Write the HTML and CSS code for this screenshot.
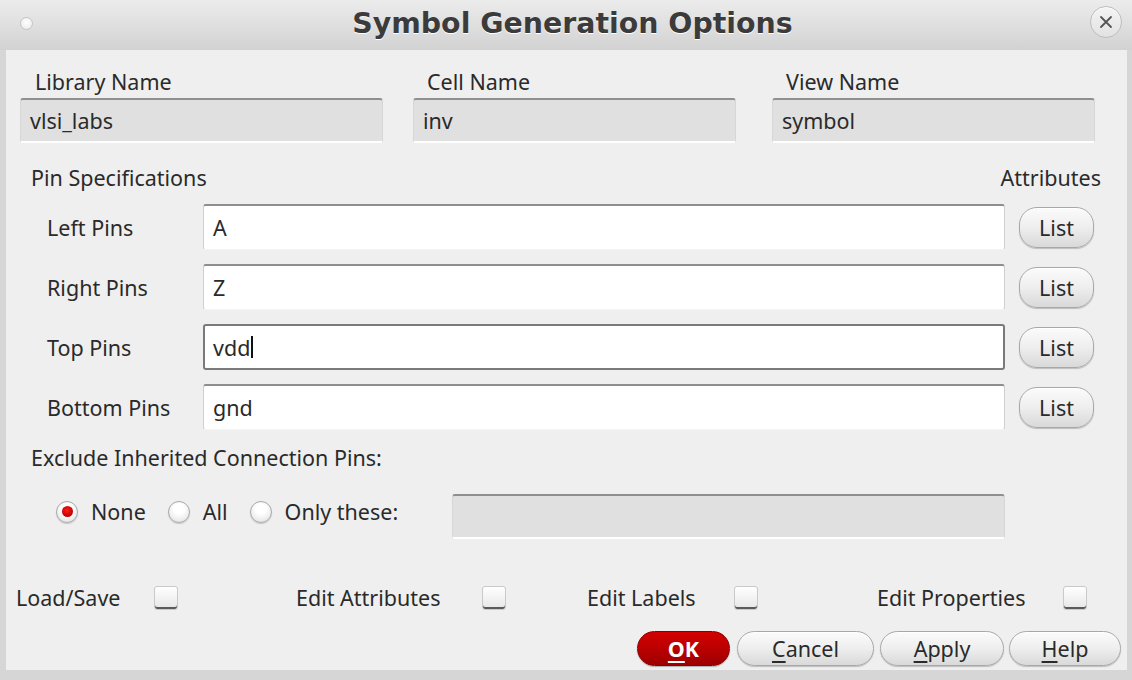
FILE: index.html
```html
<!DOCTYPE html>
<html>
<head>
<meta charset="utf-8">
<link rel="stylesheet" href="styles.css">
</head>
<body>
<div class="win">
  <div class="titlebar">
    <span class="dot"></span>
    <h1 class="title">Symbol Generation Options</h1>
    <span class="close"><svg width="16" height="16" viewBox="0 0 16 16"><path d="M3 3 L13 13 M13 3 L3 13" stroke="#555" stroke-width="1.8" stroke-linecap="round"/></svg></span>
  </div>
  <div class="content">
    <div class="names">
      <div class="nf lib"><div class="nlabel">Library Name</div><div class="ro">vlsi_labs</div></div>
      <div class="nf cell"><div class="nlabel">Cell Name</div><div class="ro">inv</div></div>
      <div class="nf view"><div class="nlabel">View Name</div><div class="ro">symbol</div></div>
    </div>
    <div class="pinhead"><span>Pin Specifications</span><span>Attributes</span></div>
    <div class="pins">
      <div class="pinrow"><span class="plabel">Left Pins</span><div class="in">A</div><span class="btn list">List</span></div>
      <div class="pinrow"><span class="plabel">Right Pins</span><div class="in">Z</div><span class="btn list">List</span></div>
      <div class="pinrow"><span class="plabel">Top Pins</span><div class="in focus">vdd<span class="caret"></span></div><span class="btn list">List</span></div>
      <div class="pinrow"><span class="plabel">Bottom Pins</span><div class="in">gnd</div><span class="btn list">List</span></div>
    </div>
    <div class="excl">Exclude Inherited Connection Pins:</div>
    <div class="radios">
      <span class="opt"><span class="radio on"></span>None</span>
      <span class="opt"><span class="radio"></span>All</span>
      <span class="opt"><span class="radio"></span>Only these:</span>
      <div class="ro only"></div>
    </div>
    <div class="checks">
      <span class="chk c1"><span class="ctext">Load/Save</span><span class="box"></span></span>
      <span class="chk c2"><span class="ctext">Edit Attributes</span><span class="box"></span></span>
      <span class="chk c3"><span class="ctext">Edit Labels</span><span class="box"></span></span>
      <span class="chk c4"><span class="ctext">Edit Properties</span><span class="box"></span></span>
    </div>
    <div class="btns">
      <span class="btn ok"><u>O</u>K</span>
      <span class="btn cancel"><u>C</u>ancel</span>
      <span class="btn apply"><u>A</u>pply</span>
      <span class="btn help"><u>H</u>elp</span>
    </div>
  </div>
</div>
</body>
</html>
```
FILE: styles.css
```css
html, body {
  margin: 0;
  padding: 0;
  background: #d6d6d6;
}
.win {
  width: 1132px;
  height: 680px;
  display: flex;
  flex-direction: column;
  font-family: "Noto Sans", "Open Sans", sans-serif;
  font-size: 21.5px;
  color: #2a2a2a;
}
.titlebar {
  height: 50px;
  flex: none;
  display: flex;
  align-items: center;
  background: linear-gradient(#ececec, #d2d2d2);
}
.dot {
  width: 11px;
  height: 11px;
  border-radius: 50%;
  background: radial-gradient(circle at 50% 40%, #ffffff, #e8e8e8);
  border: 1px solid #c4c4c4;
  margin-left: 20px;
  margin-top: -4px;
}
.title {
  flex: 1;
  margin: 0;
  text-align: center;
  font-family: "DejaVu Sans", sans-serif;
  font-weight: bold;
  font-size: 28.4px;
  color: #3b3b3b;
  text-shadow: 0 1px 0 #ffffff;
  margin-top: -4px;
  padding-left: 22px;
}
.close {
  width: 30px;
  height: 30px;
  border-radius: 50%;
  border: 1px solid #bdbdbd;
  background: linear-gradient(#f4f4f4, #e2e2e2);
  display: flex;
  align-items: center;
  justify-content: center;
  margin-right: 10px;
  margin-top: -6px;
  box-shadow: inset 0 1px 0 #fff;
}
.content {
  flex: 1;
  margin: 0 5px 10px 6px;
  background: #efefef;
  display: flex;
  flex-direction: column;
}
.names {
  display: flex;
  padding: 18px 0 0 14px;
}
.nf { display: flex; flex-direction: column; }
.lib { width: 363px; margin-right: 30px; }
.cell { width: 323px; margin-right: 36px; }
.view { width: 323px; }
.nlabel {
  line-height: 28px;
  padding-left: 15px;
  margin-bottom: 2px;
}
.cell .nlabel, .view .nlabel { padding-left: 14px; }
.ro {
  height: 45px;
  box-sizing: border-box;
  background: #e0e0e0;
  border-top: 2px solid #8f8f8f;
  border-left: 1px solid #d6d6d6;
  border-right: 1px solid #d6d6d6;
  border-bottom: 2px solid #ffffff;
  border-radius: 3px;
  display: flex;
  align-items: center;
  padding-left: 9px;
}
.pinhead {
  display: flex;
  justify-content: space-between;
  line-height: 28px;
  padding: 21px 26px 0 25px;
}
.pins {
  display: flex;
  flex-direction: column;
  gap: 14px;
  margin-top: 12px;
}
.pinrow {
  display: flex;
  align-items: center;
  height: 46px;
  padding-left: 41px;
}
.plabel { width: 156px; }
.in {
  width: 802px;
  height: 46px;
  box-sizing: border-box;
  background: #ffffff;
  border-top: 2px solid #8e8e8e;
  border-left: 1px solid #cfcfcf;
  border-right: 1px solid #cfcfcf;
  border-bottom: 1px solid #f4f4f4;
  border-radius: 3px;
  display: flex;
  align-items: center;
  padding-left: 9px;
}
.in.focus {
  border: 2px solid #7a7a7a;
  padding-left: 8px;
}
.caret {
  display: inline-block;
  width: 2px;
  height: 22px;
  background: #111;
  margin-left: 1px;
}
.btn {
  display: inline-flex;
  align-items: center;
  justify-content: center;
  box-sizing: border-box;
  border: 1px solid #a8a8a8;
  border-radius: 18px;
  background: linear-gradient(#fbfbfb, #eeeeee 50%, #d9d9d9);
  box-shadow: inset 0 1px 0 #ffffff, 0 1px 1px #bdbdbd;
  color: #2a2a2a;
}
.btn u { text-decoration-thickness: 2px; text-underline-offset: 4px; }
.list {
  width: 75px;
  height: 41px;
  margin-left: 14px;
}
.excl {
  line-height: 28px;
  padding-left: 25px;
  margin-top: 14px;
}
.radios {
  display: flex;
  align-items: center;
  height: 44px;
  margin-top: 22px;
  padding-left: 50px;
  padding-right: 122px;
  gap: 22px;
}
.opt {
  display: inline-flex;
  align-items: center;
  gap: 13px;
  margin-bottom: 9px;
}
.radio {
  width: 22px;
  height: 22px;
  box-sizing: border-box;
  border-radius: 50%;
  border: 1px solid #a9a9a9;
  background: radial-gradient(circle at 50% 35%, #ffffff 30%, #dcdcdc);
  box-shadow: 0 1px 1px #c6c6c6;
  display: inline-flex;
  align-items: center;
  justify-content: center;
}
.radio.on::after {
  content: "";
  width: 11px;
  height: 11px;
  border-radius: 50%;
  background: radial-gradient(circle at 45% 40%, #ff1a1a, #c00000 70%, #900000);
}
.only {
  width: 553px;
  height: 45px;
  margin-left: auto;
  padding: 0;
}
.checks {
  display: grid;
  grid-template-columns: 280px 291px 290px auto;
  align-items: center;
  height: 28px;
  margin-top: 45px;
  padding-left: 10px;
}
.chk {
  display: flex;
  align-items: center;
}
.c1 .ctext { width: 138px; }
.c2 .ctext { width: 186px; }
.c3 .ctext { width: 147px; }
.c4 .ctext { width: 186px; }
.box {
  width: 24px;
  height: 24px;
  box-sizing: border-box;
  border: 1px solid #c9c9c9;
  border-radius: 3px;
  background: linear-gradient(#ffffff, #e6e6e6);
  box-shadow: inset 0 -2px 0 #5a5a5a;
}
.btns {
  display: flex;
  justify-content: flex-end;
  gap: 6px;
  margin-top: auto;
  padding-right: 6px;
  padding-bottom: 4px;
}
.btns .btn { height: 35px; }
.ok {
  width: 93px;
  background: linear-gradient(#d40000, #b50000 60%, #9c0000);
  border-color: #8a0000;
  color: #ffffff;
  font-weight: bold;
  box-shadow: 0 1px 1px #b0b0b0;
}
.cancel { width: 137px; margin-left: 1px; }
.apply { width: 124px; }
.help { width: 112px; margin-left: -1px; }
```
